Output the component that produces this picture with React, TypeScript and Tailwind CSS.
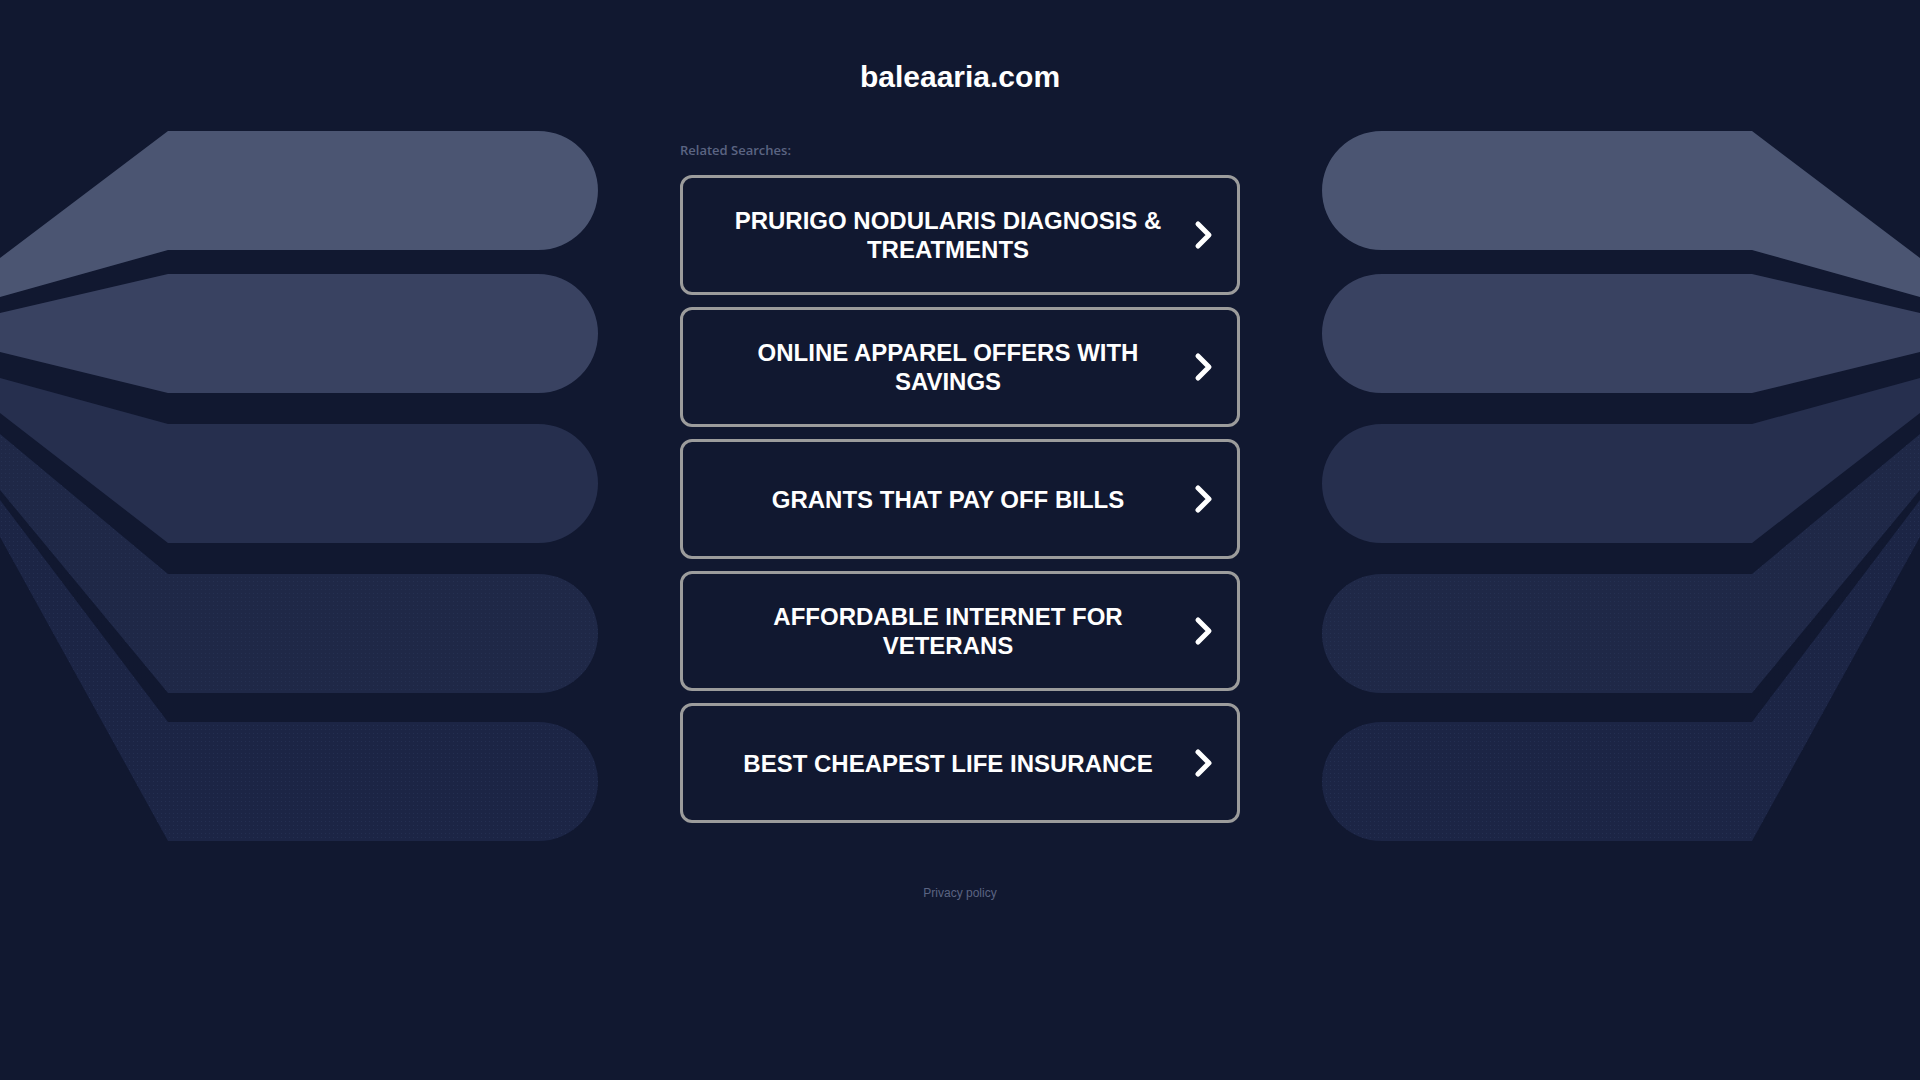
import React from "react";

const items = [
  "PRURIGO NODULARIS DIAGNOSIS & TREATMENTS",
  "ONLINE APPAREL OFFERS WITH SAVINGS",
  "GRANTS THAT PAY OFF BILLS",
  "AFFORDABLE INTERNET FOR VETERANS",
  "BEST CHEAPEST LIFE INSURANCE",
];

function Side() {
  return (
    <>
      <path d="M168 131 H538.5 A59.5 59.5 0 0 1 538.5 250 H168 L0 297 V258 Z" fill="#4b5572" />
      <path d="M168 274 H538.5 A59.5 59.5 0 0 1 538.5 393 H168 L0 352 V313 Z" fill="#394261" />
      <path d="M168 424 H538.5 A59.5 59.5 0 0 1 538.5 543 H168 L0 413 V378 Z" fill="#262f4e" />
      <path d="M168 574 H538.5 A59.5 59.5 0 0 1 538.5 693 H168 L0 490 V434 Z" fill="#1f2847" />
      <path d="M168 574 H538.5 A59.5 59.5 0 0 1 538.5 693 H168 L0 490 V434 Z" fill="url(#dots)" />
      <path d="M168 722 H538.5 A59.5 59.5 0 0 1 538.5 841 H168 L0 537 V500 Z" fill="#1c2545" />
      <path d="M168 722 H538.5 A59.5 59.5 0 0 1 538.5 841 H168 L0 537 V500 Z" fill="url(#dots)" />
    </>
  );
}

export default function App() {
  return (
    <div className="relative min-h-[1080px] w-full overflow-hidden bg-[#111830]">
      <svg
        className="absolute left-0 top-0"
        width="1920"
        height="1080"
        viewBox="0 0 1920 1080"
      >
        <defs>
          <pattern id="dots" width="4" height="4" patternUnits="userSpaceOnUse">
            <rect x="1" y="1" width="1" height="1" fill="#2a3558" opacity="0.6" />
          </pattern>
        </defs>
        <Side />
        <g transform="translate(1920 0) scale(-1 1)">
          <Side />
        </g>
      </svg>

      <div className="relative mx-auto flex w-[560px] flex-col pt-[58px]">
        <h1 className="text-center text-[30px] font-bold leading-[38px] text-white [font-family:'Liberation_Sans',Arial,sans-serif]">
          baleaaria.com
        </h1>
        <div className="mt-[45px] text-[13px] font-semibold leading-[18px] text-[#5b6482] [font-family:'Open_Sans',sans-serif]">
          Related Searches:
        </div>
        <div className="mt-[16px] flex flex-col gap-[12px]">
          {items.map((t) => (
            <a
              key={t}
              href="#"
              className="flex h-[120px] items-center rounded-[12px] border-[3px] border-[#9c9c9c] bg-[#111830] pl-[30px] pr-[22px]"
            >
              <span className="flex-1 px-[6px] text-center text-[24px] font-bold leading-[29px] text-white [font-family:'Liberation_Sans',Arial,sans-serif]">
                {t}
              </span>
              <svg width="22" height="30" viewBox="0 0 22 30" className="ml-[10px] shrink-0">
                <path
                  d="M5 4 L16 15 L5 26"
                  fill="none"
                  stroke="#ffffff"
                  strokeWidth="5"
                  strokeLinecap="round"
                  strokeLinejoin="round"
                />
              </svg>
            </a>
          ))}
        </div>
        <div className="mt-[62px] text-center text-[12px] leading-[16px] text-[#5b6482] [font-family:'Liberation_Sans',Arial,sans-serif]">
          Privacy policy
        </div>
      </div>
    </div>
  );
}
